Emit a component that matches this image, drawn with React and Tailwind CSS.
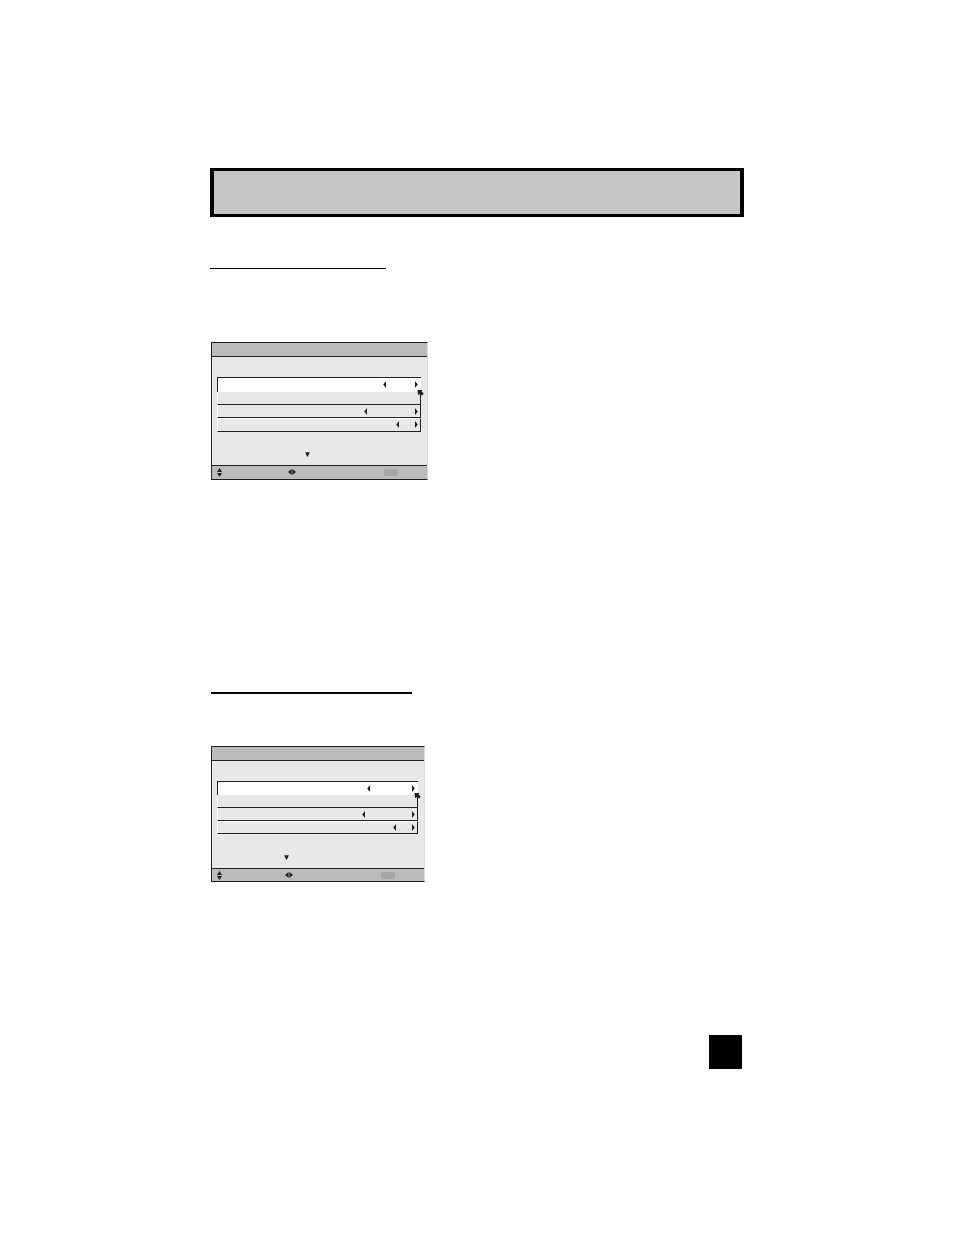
import React from 'react';

function Arrow({ direction, label }) {
  return (
    <button type="button" aria-label={label} className="block shrink-0">
      <svg width="3" height="7" viewBox="0 0 3 7" className="block fill-[#231f20]">
        <path d={direction === 'left' ? 'M3 0V7L0.2 3.5Z' : 'M0 0V7L2.8 3.5Z'} />
      </svg>
    </button>
  );
}

function Cursor() {
  return (
    <svg
      width="7"
      height="7"
      viewBox="0 0 7 7"
      className="absolute -right-1 -top-0.5 z-10 fill-[#231f20]"
    >
      <path d="M0.4 0H5.4L4.6 1.6L6.8 3.8L5 5.6L3.2 4L1.2 5.2Z" />
    </svg>
  );
}

function MenuRow({ className, gap }) {
  return (
    <li className={`flex justify-end ${className}`}>
      {gap && (
        <div className={`flex items-start ${gap}`}>
          <Arrow direction="left" label="Previous" />
          <Arrow direction="right" label="Next" />
        </div>
      )}
    </li>
  );
}

function MenuPanel({ width, rows, firstRow, lastRow, hint, footer, footerGap }) {
  const row =
    'border-b border-b-[#231f20] border-l border-l-white border-r border-r-[#231f20] pr-0.5';

  return (
    <section
      className={`ml-px w-full border border-[#231f20] border-r-[#d9d9d9] bg-[#e8e8e8] ${width}`}
    >
      <header className="h-3.5 border-b border-[#231f20] bg-[#bbbbbb]" />

      <ul className="ml-[5px] mr-1.5 mt-5">
        <MenuRow
          className={`border-l border-t border-[#231f20] bg-white pr-[3px] pt-[3px] ${firstRow}`}
          gap={rows[0]}
        />
        <li className={`relative h-[13px] ${row}`}>
          <Cursor />
        </li>
        <MenuRow className={`h-[13px] pt-[3px] ${row}`} gap={rows[1]} />
        <MenuRow className={`border-t border-t-white pt-0.5 ${row} ${lastRow}`} gap={rows[2]} />
      </ul>

      <div className={hint}>
        <svg width="5" height="5" viewBox="0 0 5 5" className="block fill-[#231f20]">
          <path d="M0.2 0.3H4.8L3 4.4H2Z" />
        </svg>
      </div>

      <footer className={`flex border-t border-[#231f20] bg-[#bbbbbb] pl-[5px] pt-0.5 ${footer}`}>
        <svg width="5" height="9" viewBox="0 0 5 9" className="block fill-[#231f20]">
          <path d="M2.5 0L5 4H0ZM2.5 9L5 5H0Z" />
        </svg>
        <svg
          width="8"
          height="6"
          viewBox="0 0 8 6"
          className={`mt-px block fill-[#231f20] ${footerGap}`}
        >
          <path d="M0 3L3.6 0V6ZM8 3L4.4 0V6Z" />
        </svg>
        <span className="ml-[88px] mt-px h-[7px] w-3.5 rounded-xs bg-[#a7a5a6]" />
      </footer>
    </section>
  );
}

function App() {
  return (
    <div className="min-h-screen bg-white pb-40 pt-[168px]">
      <main className="mx-auto w-full max-w-[534px]">
        <header className="h-[49px] border-x-4 border-y-[3px] border-black bg-[#c6c6c6]" />

        <hr className="mt-[51px] w-44 border-t border-black" />

        <div className="mt-[73px]">
          <MenuPanel
            width="max-w-[217px]"
            rows={['gap-[29px]', 'gap-12', 'gap-4']}
            firstRow="h-[15px]"
            lastRow="h-3.5"
            hint="h-[33px] pl-[93px] pt-5"
            footer="h-3.5"
            footerGap="ml-[66px]"
          />
        </div>

        <hr className="ml-px mt-[212px] w-[201px] border-t-2 border-black" />

        <div className="mt-[52px]">
          <MenuPanel
            width="max-w-[214px]"
            rows={['gap-[42px]', 'gap-[47px]', 'gap-4']}
            firstRow="h-3.5"
            lastRow="h-[13px]"
            hint="h-[34px] pl-[72px] pt-[21px]"
            footer="h-[13px]"
            footerGap="ml-[63px]"
          />
        </div>

        <footer className="mt-[153px] flex justify-end pr-0.5">
          <div className="h-[34px] w-[33px] bg-black" />
        </footer>
      </main>
    </div>
  );
}

export default App;
